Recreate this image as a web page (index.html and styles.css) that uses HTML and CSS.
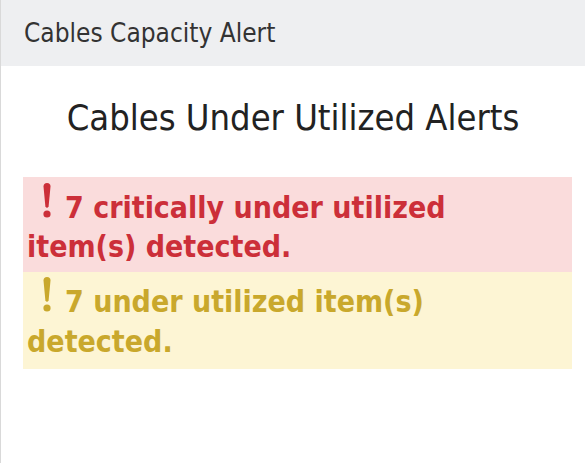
FILE: index.html
```html
<!DOCTYPE html>
<html>
<head>
<meta charset="utf-8">
<link rel="stylesheet" href="styles.css">
</head>
<body>
<div class="panel">
  <div class="panel-header">Cables Capacity Alert</div>
  <div class="panel-body">
    <h2 class="title">Cables Under Utilized Alerts</h2>
    <div class="alert alert-danger"><svg class="icon" viewBox="0 0 10 35" width="10" height="35"><path d="M1.5 3.5 Q1.5 0 5 0 Q8.5 0 8.5 3.5 L6.6 23.5 Q5 26 3.4 23.5 Z"/><circle cx="5" cy="31" r="3.6"/></svg>7 critically under utilized item(s) detected.</div>
    <div class="alert alert-warning"><svg class="icon" viewBox="0 0 10 35" width="10" height="35"><path d="M1.5 3.5 Q1.5 0 5 0 Q8.5 0 8.5 3.5 L6.6 23.5 Q5 26 3.4 23.5 Z"/><circle cx="5" cy="31" r="3.6"/></svg>7 under utilized item(s) detected.</div>
  </div>
</div>
</body>
</html>
```
FILE: styles.css
```css
html, body {
  margin: 0;
  padding: 0;
  background: #ffffff;
}
body {
  font-family: "DejaVu Sans Condensed", "DejaVu Sans", sans-serif;
  color: #333;
}
.panel {
  height: 463px;
  box-sizing: border-box;
  border-left: 1px solid #d9d9d9;
}
.panel-header {
  height: 66px;
  line-height: 66px;
  background: #eeeff1;
  padding-left: 23px;
  font-size: 26px;
  color: #333;
}
.panel-body {
  padding: 0 13px 0 22px;
}
.title {
  margin: 0 -13px 0 -22px;
  padding-top: 30px;
  height: 81px;
  line-height: 44px;
  font-size: 36px;
  font-weight: normal;
  text-align: center;
  color: #222;
}
.alert {
  font-size: 30px;
  font-weight: bold;
  line-height: 39px;
  padding: 11px 24px 6px 4px;
}
.alert-danger {
  background: #fadcdc;
  color: #cc2f39;
}
.alert-warning {
  background: #fdf5d4;
  color: #c9a82c;
  line-height: 40px;
  padding-top: 10px;
  padding-bottom: 7px;
}
.icon {
  fill: currentColor;
  margin: -6px 13px 0 15px;
}
```
